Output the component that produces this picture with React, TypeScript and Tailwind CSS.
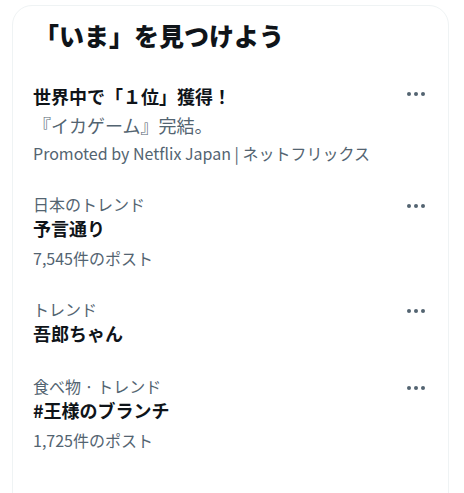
const FONT = "font-['Noto_Sans_CJK_JP','Noto_Sans',sans-serif]"

type Trend = {
  label: string
  title: string
  count?: string
}

const TRENDS: Trend[] = [
  { label: '日本のトレンド', title: '予言通り', count: '7,545件のポスト' },
  { label: 'トレンド', title: '吾郎ちゃん' },
  { label: '食べ物 · トレンド', title: '#王様のブランチ', count: '1,725件のポスト' },
]

function MoreDots({ className = '' }: { className?: string }) {
  return (
    <div className={`flex h-[24px] w-[24px] items-center justify-center gap-[3px] ${className}`}>
      <span className="h-[4px] w-[4px] rounded-full bg-[#536471]" />
      <span className="h-[4px] w-[4px] rounded-full bg-[#536471]" />
      <span className="h-[4px] w-[4px] rounded-full bg-[#536471]" />
    </div>
  )
}

function TrendRow({ trend }: { trend: Trend }) {
  return (
    <div className="flex justify-between pl-[20px] pr-[20px] pt-[15px] pb-[14px]">
      <div className="flex flex-col">
        <div className="text-[16px] leading-[22px] text-[#536471]">{trend.label}</div>
        <div className="text-[18px] font-bold leading-[26px] text-[#0f1419]">{trend.title}</div>
        {trend.count && (
          <div className="mt-[6px] text-[16px] leading-[22px] text-[#536471]">{trend.count}</div>
        )}
      </div>
      <MoreDots className="mt-[1px]" />
    </div>
  )
}

export default function App() {
  return (
    <div className={`h-[493px] w-[464px] overflow-hidden bg-white pl-[12px] pr-[15px] pt-[5px] ${FONT}`}>
      <div className="min-h-[520px] rounded-[20px] border border-[#eff3f4]">
        <div className="pl-[21px] pr-[20px] pb-[18px] pt-[14px]">
          <h2 className="text-[25px] font-extrabold leading-[30px] text-[#0f1419]">「いま」を見つけよう</h2>
        </div>

        <div className="flex justify-between pl-[20px] pr-[20px] pt-[15px] pb-[14px]">
          <div className="flex flex-col">
            <div className="text-[18px] font-bold leading-[26px] text-[#0f1419]">世界中で「１位」獲得！</div>
            <div className="mt-[2px] text-[18px] leading-[28px] text-[#536471]">『イカゲーム』完結。</div>
            <div className="mt-[3px] text-[16px] leading-[22px] text-[#536471]">Promoted by Netflix Japan | ネットフリックス</div>
          </div>
          <MoreDots className="-mt-[1px]" />
        </div>

        {TRENDS.map((t) => (
          <TrendRow key={t.title} trend={t} />
        ))}

        <div className="px-[20px] pt-[25px] text-[18px] leading-[24px] text-[#1d9bf0]">さらに表示</div>
      </div>
    </div>
  )
}
